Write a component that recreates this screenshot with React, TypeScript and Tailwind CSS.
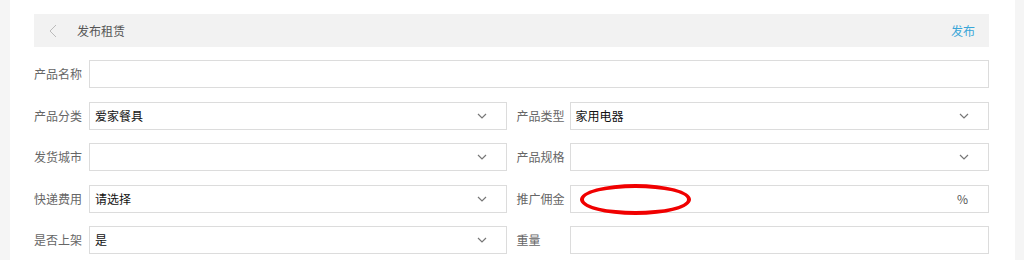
import { ReactNode } from 'react';

const font = { fontFamily: '"Noto Sans CJK SC", "Noto Sans", sans-serif' };

const Chevron = () => (
  <svg width="10" height="6" viewBox="0 0 10 6" className="shrink-0">
    <polyline points="1,1 5,5 9,1" fill="none" stroke="#777" strokeWidth="1.2" />
  </svg>
);

const Field = ({
  label,
  value,
  select,
  suffix,
  narrow,
  children,
}: {
  label: string;
  value?: string;
  select?: boolean;
  suffix?: string;
  narrow?: boolean;
  children?: ReactNode;
}) => (
  <div className="flex h-[28px] items-center">
    <span className={narrow ? 'w-[53px] shrink-0 text-[12px] text-[#666]' : 'w-[55px] shrink-0 text-[12px] text-[#666]'}>
      {label}
    </span>
    <div className="relative flex h-full flex-1 items-center justify-between border border-[#dcdcdc] bg-white pl-[5px] pr-[19px]">
      <span className="text-[12px] text-[#111]">{value}</span>
      {select && <Chevron />}
      {suffix && <span className="pr-[1px] text-[12px] text-[#555]">{suffix}</span>}
      {children}
    </div>
  </div>
);

export default function App() {
  return (
    <div className="flex h-[260px] w-[1024px] overflow-hidden bg-white" style={font}>
      <div className="w-[10px] shrink-0 bg-[#f5f5f5]" />
      <div className="flex flex-1 flex-col pl-[24px] pr-[26px] pt-[14px]">
        <div className="flex h-[33px] items-center justify-between bg-[#f2f2f2] pl-[15px] pr-[14px]">
          <div className="flex items-center gap-[20px]">
            <svg width="8" height="14" viewBox="0 0 8 14">
              <polyline points="7,1 1,7 7,13" fill="none" stroke="#bbb" strokeWidth="1" />
            </svg>
            <span className="text-[12px] text-[#555]">发布租赁</span>
          </div>
          <span className="text-[12px] text-[#3aa6d8]">发布</span>
        </div>

        <div className="mt-[13px] flex flex-col gap-y-[13.5px]">
          <Field label="产品名称" />
          <div className="grid grid-cols-2 gap-x-[10px] gap-y-[13.5px]">
            <Field label="产品分类" value="爱家餐具" select />
            <Field label="产品类型" value="家用电器" select narrow />
            <Field label="发货城市" select />
            <Field label="产品规格" select narrow />
            <Field label="快递费用" value="请选择" select />
            <Field label="推广佣金" suffix="%" narrow>
              <div className="absolute -top-[2px] left-[9px] h-[31px] w-[111px] rounded-[50%] border-[4px] border-[#f00000]" />
            </Field>
            <Field label="是否上架" value="是" select />
            <Field label="重量" narrow />
          </div>
        </div>
      </div>
      <div className="w-[9px] shrink-0 bg-[#f5f5f5]" />
    </div>
  );
}
